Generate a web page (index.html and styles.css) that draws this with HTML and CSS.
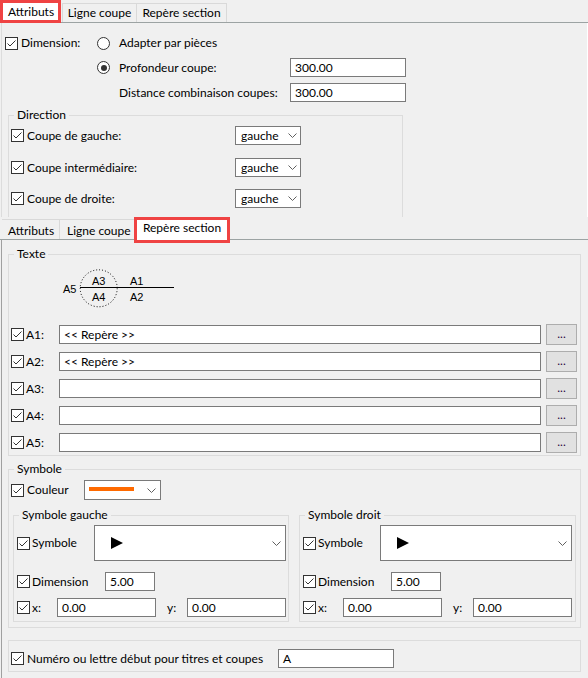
FILE: index.html
```html
<!DOCTYPE html>
<html lang="fr">
<head>
<meta charset="utf-8">
<title>Repère section</title>
<link rel="stylesheet" href="styles.css">
</head>
<body>
<section class="shot shot1">
  <div class="tabs tabs1">
    <div class="tab tab-hl tab-hl1">Attributs</div>
    <div class="tab tab-n1 t1b">Ligne coupe</div>
    <div class="tab tab-n1 t1c">Repère section</div>
  </div>
  <div class="panel panel1">
    <div class="row row-dim">
      <div class="c-first"><svg class="ck" viewBox="0 0 13 13" width="13" height="13"><rect x=".5" y=".5" width="12" height="12" fill="#fff" stroke="#333"/><path d="M2.5 6.5 5 9l5.5-5.5" fill="none" stroke="#333"/></svg><span>Dimension:</span></div>
      <span class="radio"></span><span>Adapter par pièces</span>
    </div>
    <div class="row row-prof">
      <div class="c-first"></div>
      <span class="radio on"></span><span class="c-lab">Profondeur coupe:</span>
      <div class="edit e116">300.00</div>
    </div>
    <div class="row row-dist">
      <div class="c-indent"></div>
      <span class="c-lab">Distance combinaison coupes:</span>
      <div class="edit e116">300.00</div>
    </div>
    <div class="group g-dir">
      <div class="legend">Direction</div>
      <div class="drow dr1">
        <div class="dlab"><svg class="ck" viewBox="0 0 13 13" width="13" height="13"><rect x=".5" y=".5" width="12" height="12" fill="#fff" stroke="#333"/><path d="M2.5 6.5 5 9l5.5-5.5" fill="none" stroke="#333"/></svg><span>Coupe de gauche:</span></div>
        <div class="combo cg"><span>gauche</span><svg class="chev" viewBox="0 0 9 5" width="9" height="5"><path d="M.5.5l4 4 4-4" fill="none" stroke="#606060"/></svg></div>
      </div>
      <div class="drow dr2">
        <div class="dlab"><svg class="ck" viewBox="0 0 13 13" width="13" height="13"><rect x=".5" y=".5" width="12" height="12" fill="#fff" stroke="#333"/><path d="M2.5 6.5 5 9l5.5-5.5" fill="none" stroke="#333"/></svg><span>Coupe intermédiaire:</span></div>
        <div class="combo cg"><span>gauche</span><svg class="chev" viewBox="0 0 9 5" width="9" height="5"><path d="M.5.5l4 4 4-4" fill="none" stroke="#606060"/></svg></div>
      </div>
      <div class="drow dr3">
        <div class="dlab"><svg class="ck" viewBox="0 0 13 13" width="13" height="13"><rect x=".5" y=".5" width="12" height="12" fill="#fff" stroke="#333"/><path d="M2.5 6.5 5 9l5.5-5.5" fill="none" stroke="#333"/></svg><span>Coupe de droite:</span></div>
        <div class="combo cg"><span>gauche</span><svg class="chev" viewBox="0 0 9 5" width="9" height="5"><path d="M.5.5l4 4 4-4" fill="none" stroke="#606060"/></svg></div>
      </div>
    </div>
  </div>
</section>

<section class="shot shot2">
  <div class="tabs tabs2">
    <div class="tab tab-n2 t2a">Attributs</div>
    <div class="tab tab-n2 t2b">Ligne coupe</div>
    <div class="tab tab-hl tab-hl2">Repère section</div>
  </div>
  <div class="panel panel2">
    <div class="group g-texte">
      <div class="legend">Texte</div>
      <svg class="diag" width="120" height="42" viewBox="0 0 120 42">
        <circle cx="38.7" cy="20.3" r="18.5" fill="none" stroke="#000" stroke-width="1" stroke-dasharray="1 2"/>
        <line x1="20" y1="19.5" x2="114" y2="19.5" stroke="#000" stroke-width="1"/>
        <text x="3" y="24.5" class="dt">A5</text>
        <text x="38.7" y="17" class="dt" text-anchor="middle">A3</text>
        <text x="38.7" y="32.7" class="dt" text-anchor="middle">A4</text>
        <text x="70" y="17" class="dt">A1</text>
        <text x="70" y="32.7" class="dt">A2</text>
      </svg>
      <div class="trow trow-first">
        <div class="tlab"><svg class="ck" viewBox="0 0 13 13" width="13" height="13"><rect x=".5" y=".5" width="12" height="12" fill="#fff" stroke="#333"/><path d="M2.5 6.5 5 9l5.5-5.5" fill="none" stroke="#333"/></svg><span>A1:</span></div>
        <div class="edit tedit">&lt;&lt; Repère &gt;&gt;</div>
        <div class="dots">...</div>
      </div>
      <div class="trow">
        <div class="tlab"><svg class="ck" viewBox="0 0 13 13" width="13" height="13"><rect x=".5" y=".5" width="12" height="12" fill="#fff" stroke="#333"/><path d="M2.5 6.5 5 9l5.5-5.5" fill="none" stroke="#333"/></svg><span>A2:</span></div>
        <div class="edit tedit">&lt;&lt; Repère &gt;&gt;</div>
        <div class="dots">...</div>
      </div>
      <div class="trow">
        <div class="tlab"><svg class="ck" viewBox="0 0 13 13" width="13" height="13"><rect x=".5" y=".5" width="12" height="12" fill="#fff" stroke="#333"/><path d="M2.5 6.5 5 9l5.5-5.5" fill="none" stroke="#333"/></svg><span>A3:</span></div>
        <div class="edit tedit"></div>
        <div class="dots">...</div>
      </div>
      <div class="trow">
        <div class="tlab"><svg class="ck" viewBox="0 0 13 13" width="13" height="13"><rect x=".5" y=".5" width="12" height="12" fill="#fff" stroke="#333"/><path d="M2.5 6.5 5 9l5.5-5.5" fill="none" stroke="#333"/></svg><span>A4:</span></div>
        <div class="edit tedit"></div>
        <div class="dots">...</div>
      </div>
      <div class="trow">
        <div class="tlab"><svg class="ck" viewBox="0 0 13 13" width="13" height="13"><rect x=".5" y=".5" width="12" height="12" fill="#fff" stroke="#333"/><path d="M2.5 6.5 5 9l5.5-5.5" fill="none" stroke="#333"/></svg><span>A5:</span></div>
        <div class="edit tedit"></div>
        <div class="dots">...</div>
      </div>
    </div>

    <div class="group g-sym">
      <div class="legend">Symbole</div>
      <div class="crow">
        <div class="clab"><svg class="ck" viewBox="0 0 13 13" width="13" height="13"><rect x=".5" y=".5" width="12" height="12" fill="#fff" stroke="#333"/><path d="M2.5 6.5 5 9l5.5-5.5" fill="none" stroke="#333"/></svg><span>Couleur</span></div>
        <div class="combo ccombo"><span class="orange"></span><svg class="chev" viewBox="0 0 9 5" width="9" height="5"><path d="M.5.5l4 4 4-4" fill="none" stroke="#606060"/></svg></div>
      </div>
      <div class="subs">
        <div class="group g-sub g-left">
          <div class="legend">Symbole gauche</div>
          <div class="srow s-sym">
            <div class="slab sl-sym"><svg class="ck" viewBox="0 0 13 13" width="13" height="13"><rect x=".5" y=".5" width="12" height="12" fill="#fff" stroke="#333"/><path d="M2.5 6.5 5 9l5.5-5.5" fill="none" stroke="#333"/></svg><span>Symbole</span></div>
            <div class="combo scombo"><svg class="tri" viewBox="0 0 12 12" width="12" height="12"><path d="M0 0 12 6 0 12z" fill="#000"/></svg><svg class="chev" viewBox="0 0 9 5" width="9" height="5"><path d="M.5.5l4 4 4-4" fill="none" stroke="#606060"/></svg></div>
          </div>
          <div class="srow s-dim">
            <div class="slab sl-dim"><svg class="ck" viewBox="0 0 13 13" width="13" height="13"><rect x=".5" y=".5" width="12" height="12" fill="#fff" stroke="#333"/><path d="M2.5 6.5 5 9l5.5-5.5" fill="none" stroke="#333"/></svg><span>Dimension</span></div>
            <div class="edit sdim">5.00</div>
          </div>
          <div class="srow s-xy">
            <div class="slab sl-x"><svg class="ck" viewBox="0 0 13 13" width="13" height="13"><rect x=".5" y=".5" width="12" height="12" fill="#fff" stroke="#333"/><path d="M2.5 6.5 5 9l5.5-5.5" fill="none" stroke="#333"/></svg><span>x:</span></div>
            <div class="edit sx">0.00</div>
            <span class="ylab">y:</span>
            <div class="edit sx">0.00</div>
          </div>
        </div>
        <div class="group g-sub g-right">
          <div class="legend">Symbole droit</div>
          <div class="srow s-sym">
            <div class="slab sl-sym"><svg class="ck" viewBox="0 0 13 13" width="13" height="13"><rect x=".5" y=".5" width="12" height="12" fill="#fff" stroke="#333"/><path d="M2.5 6.5 5 9l5.5-5.5" fill="none" stroke="#333"/></svg><span>Symbole</span></div>
            <div class="combo scombo"><svg class="tri" viewBox="0 0 12 12" width="12" height="12"><path d="M0 0 12 6 0 12z" fill="#000"/></svg><svg class="chev" viewBox="0 0 9 5" width="9" height="5"><path d="M.5.5l4 4 4-4" fill="none" stroke="#606060"/></svg></div>
          </div>
          <div class="srow s-dim">
            <div class="slab sl-dim"><svg class="ck" viewBox="0 0 13 13" width="13" height="13"><rect x=".5" y=".5" width="12" height="12" fill="#fff" stroke="#333"/><path d="M2.5 6.5 5 9l5.5-5.5" fill="none" stroke="#333"/></svg><span>Dimension</span></div>
            <div class="edit sdim">5.00</div>
          </div>
          <div class="srow s-xy">
            <div class="slab sl-x"><svg class="ck" viewBox="0 0 13 13" width="13" height="13"><rect x=".5" y=".5" width="12" height="12" fill="#fff" stroke="#333"/><path d="M2.5 6.5 5 9l5.5-5.5" fill="none" stroke="#333"/></svg><span>x:</span></div>
            <div class="edit sx">0.00</div>
            <span class="ylab">y:</span>
            <div class="edit sx">0.00</div>
          </div>
        </div>
      </div>
    </div>

    <div class="group g-num">
      <div class="nrow">
        <div class="nlab"><svg class="ck" viewBox="0 0 13 13" width="13" height="13"><rect x=".5" y=".5" width="12" height="12" fill="#fff" stroke="#333"/><path d="M2.5 6.5 5 9l5.5-5.5" fill="none" stroke="#333"/></svg><span>Numéro ou lettre début pour titres et coupes</span></div>
        <div class="edit nedit">A</div>
      </div>
    </div>
  </div>
</section>
</body>
</html>
```

FILE: styles.css
```css
* { box-sizing: border-box; }
html, body { margin: 0; padding: 0; }
body {
  width: 588px;
  height: 678px;
  overflow: hidden;
  background: #f0f0f0;
  color: #000;
  font-family: Lato, "Noto Sans", "DejaVu Sans", sans-serif;
  font-size: 12px;
  line-height: 16px;
}
svg { display: block; flex: none; }

.shot1 { height: 217px; overflow: hidden; }
.shot2 { height: 461px; overflow: hidden; }

/* tab strips */
.tabs {
  display: flex;
  align-items: flex-end;
  height: 23px;
  border-bottom: 1px solid #9ca3a3;
}
.tab { white-space: nowrap; line-height: 16px; flex: none; }
.tab-hl {
  position: relative;
  z-index: 1;
  background: #fff;
  border: 3px solid #ef4343;
}
.tab-hl1 { width: 61px; height: 23px; margin-bottom: -1px; padding: 1px 0 0 5px; }
.tab-n1 {
  height: 19px;
  border: 1px solid #d9d9d9;
  border-bottom: 0;
  padding-top: 1px;
  text-align: center;
}
.t1b { width: 75px; margin-left: 1px; }
.t1c { width: 90px; border-left: 0; }

.tab-n2 { height: 20px; border-top: 1px solid #d9d9d9; padding-top: 3px; }
.t2a { width: 58px; margin-left: 2px; border-right: 1px solid #d9d9d9; padding-left: 6px; }
.t2b { width: 74px; padding-left: 7px; }
.tab-hl2 { width: 96px; height: 26px; margin-bottom: -4px; text-align: center; }

/* panels */
.panel1 {
  height: 194px;
  margin-left: 1px;
  border-left: 1px solid #dcdcdc;
  border-right: 1px solid #fff;
  padding-top: 10px;
}
.panel2 {
  height: 438px;
  margin-left: 1px;
  border-left: 1px solid #a0a0a0;
  padding-top: 14px;
}

/* generic controls */
.edit {
  flex: none;
  height: 19px;
  background: #fff;
  border: 1px solid #7a7a7a;
  padding-left: 4px;
  line-height: 17px;
  white-space: nowrap;
}
.combo {
  flex: none;
  display: flex;
  align-items: center;
  justify-content: space-between;
  background: #fff;
  border: 1px solid #7a7a7a;
}
.radio {
  flex: none;
  width: 13px;
  height: 13px;
  border: 1px solid #333;
  border-radius: 50%;
  background: #fff;
  margin-right: 9px;
  display: flex;
  align-items: center;
  justify-content: center;
}
.radio.on::after {
  content: "";
  width: 6px;
  height: 6px;
  border-radius: 50%;
  background: #333;
}
.group { border: 1px solid #dcdcdc; }
.legend {
  width: max-content;
  height: 16px;
  margin: -9px 0 0 5px;
  padding: 0 3px;
  background: #f0f0f0;
  white-space: nowrap;
}

/* top panel rows */
.row { display: flex; align-items: center; }
.row-dim { height: 20px; }
.row-prof { height: 19px; margin-top: 5px; }
.row-dist { height: 19px; margin-top: 6px; }
.c-first {
  flex: none;
  width: 95px;
  height: 100%;
  padding-left: 3px;
  display: flex;
  align-items: center;
  gap: 3px;
}
.c-indent { flex: none; width: 117px; }
.c-lab { flex: none; width: 171px; white-space: nowrap; }
.e116 { width: 116px; }

.g-dir { width: 395px; height: 140px; margin: 13px 0 0 6px; }
.drow { display: flex; align-items: center; height: 19px; padding-left: 2px; }
.dr1 { margin-top: 3px; }
.dr2 { margin-top: 13px; }
.dr3 { margin-top: 12px; }
.dlab { flex: none; width: 224px; display: flex; align-items: center; gap: 3px; }
.cg { width: 66px; height: 19px; padding: 0 3px 0 5px; }

/* Texte group */
.g-texte { width: 573px; margin-left: 6px; padding-bottom: 2px; }
.diag { margin: 6px 0 0 51px; }
.dt { font-family: "Liberation Sans", Arial, sans-serif; font-size: 11px; fill: #000; }
.trow { display: flex; align-items: center; height: 21px; padding-left: 2px; margin-top: 6px; }
.trow-first { margin-top: 14px; }
.tlab { flex: none; width: 48px; display: flex; align-items: center; gap: 2px; }
.tedit { width: 482px; }
.dots {
  flex: none;
  width: 31px;
  height: 21px;
  margin-left: 5px;
  background: #e1e1e1;
  border: 1px solid #adadad;
  text-align: center;
  line-height: 17px;
  color: #2a0a40;
}

/* Symbole group */
.g-sym { width: 573px; margin: 13px 0 0 6px; padding-bottom: 5px; }
.crow { display: flex; align-items: center; height: 20px; margin-top: 3px; padding-left: 2px; }
.clab { flex: none; width: 73px; display: flex; align-items: center; gap: 3px; }
.ccombo { width: 77px; height: 20px; padding: 0 4px 0 4px; }
.orange { width: 45px; height: 4px; background: #ff6a00; margin-bottom: 2px; }

.subs { display: flex; gap: 10px; margin: 15px 0 0 4px; }
.g-sub { padding-bottom: 4px; }
.g-left { width: 276px; }
.g-right { width: 277px; }
.srow { display: flex; align-items: center; padding-left: 3px; }
.s-sym { height: 36px; margin-top: 2px; }
.s-dim { height: 19px; margin-top: 11px; }
.s-xy { height: 19px; margin-top: 7px; }
.slab { flex: none; display: flex; align-items: center; gap: 2px; }
.sl-sym { width: 77px; }
.sl-dim { width: 88px; }
.sl-x { width: 40px; }
.scombo { width: 192px; height: 36px; padding: 0 4px 0 16px; }
.sdim { width: 50px; }
.sx { width: 99px; }
.ylab { flex: none; width: 20px; margin-left: 11px; }

/* bottom group */
.g-num { width: 573px; margin: 12px 0 0 6px; padding: 8px 0 3px; }
.nrow { display: flex; align-items: center; height: 19px; padding-left: 2px; }
.nlab { flex: none; width: 267px; display: flex; align-items: center; gap: 3px; white-space: nowrap; }
.nedit { width: 116px; }
```
